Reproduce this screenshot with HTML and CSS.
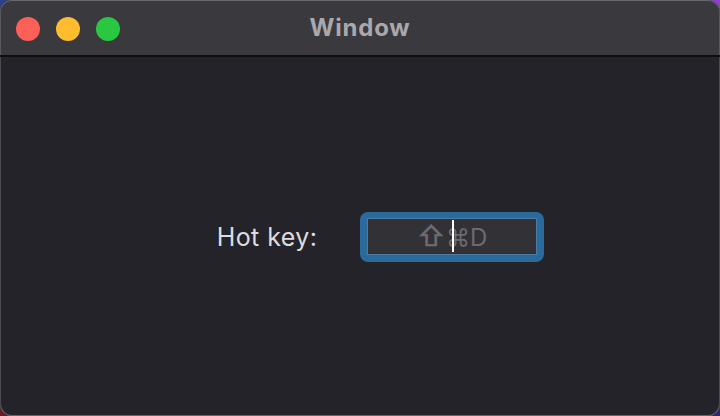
FILE: index.html
```html
<!DOCTYPE html>
<html>
<head>
<meta charset="utf-8">
<link rel="stylesheet" href="styles.css">
</head>
<body>
<div class="window">
  <div class="titlebar">
    <div class="lights">
      <span class="light red"></span>
      <span class="light yellow"></span>
      <span class="light green"></span>
    </div>
    <div class="title">Window</div>
  </div>
  <div class="content">
    <div class="form-row">
      <label class="label">Hot key:</label>
      <div class="field-ring">
        <div class="field">
          <span class="placeholder"><span class="shift">⇧</span>⌘D</span>
          <span class="caret"></span>
        </div>
      </div>
    </div>
  </div>
</div>
</body>
</html>
```
FILE: styles.css
```css
html, body {
  margin: 0;
  padding: 0;
  width: 720px;
  height: 416px;
  overflow: hidden;
}
body {
  background:
    linear-gradient(to right, #2c3f86 0%, #2c3f86 50%, #8e3fd0 50%, #8e3fd0 100%) top / 100% 50% no-repeat,
    linear-gradient(to right, #6a1a22 0%, #6a1a22 50%, #2d2472 50%, #2d2472 100%) bottom / 100% 50% no-repeat;
  font-family: "Inter", "DejaVu Sans", sans-serif;
}
.window {
  box-sizing: border-box;
  width: 720px;
  height: 416px;
  border-radius: 12px;
  overflow: hidden;
  background: #242329;
  display: flex;
  flex-direction: column;
  box-shadow: inset 0 0 0 1px #67666c;
}
.titlebar {
  position: relative;
  height: 55px;
  flex: none;
  background: #3a393e;
  border-bottom: 2px solid #0f0f11;
  display: flex;
  align-items: center;
  justify-content: center;
  border-radius: 12px 12px 0 0;
  box-shadow: inset 0 1px 0 #6a696e, inset 1px 0 0 #5a595e, inset -1px 0 0 #5a595e;
}
.lights {
  position: absolute;
  left: 16px;
  top: 17px;
  display: flex;
  gap: 16px;
}
.light {
  width: 24px;
  height: 24px;
  border-radius: 50%;
  display: block;
}
.red { background: #fe5f57; }
.yellow { background: #febc2e; }
.green { background: #29c840; }
.title {
  font-weight: 700;
  font-size: 24px;
  letter-spacing: 0.8px;
  color: #a9a8ad;
}
.content {
  flex: 1;
  display: flex;
  align-items: center;
  justify-content: center;
  padding-left: 41px;
  box-shadow: inset 0 -1px 0 #67666c, inset 1px 0 0 #4a494e, inset -1px 0 0 #4a494e;
}
.form-row {
  display: flex;
  align-items: center;
  gap: 43px;
}
.label {
  font-size: 25px;
  color: #dddce0;
  letter-spacing: 0.4px;
}
.field-ring {
  box-sizing: border-box;
  width: 184px;
  height: 50px;
  border-radius: 8px;
  background: #2a6a9d;
  padding: 6px 7px 7px 7px;
}
.field {
  position: relative;
  box-sizing: border-box;
  height: 37px;
  background: #323136;
  border: 1px solid #4b7ca6;
  display: flex;
  align-items: center;
  justify-content: center;
}
.placeholder {
  font-size: 24px;
  color: #6c6b70;
  line-height: 1;
}
.shift {
  font-size: 27px;
  -webkit-text-stroke: 0.6px #6c6b70;
  margin-right: 1px;
}
.caret {
  position: absolute;
  left: 84px;
  top: 1px;
  width: 2px;
  height: 32px;
  background: #ffffff;
}
```
